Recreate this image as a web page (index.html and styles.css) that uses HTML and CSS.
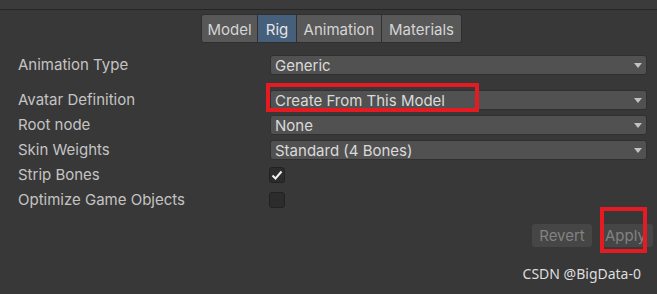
FILE: index.html
```html
<!DOCTYPE html>
<html lang="en">
<head>
    <meta charset="UTF-8">
    <title>Rig</title>
    <link rel="stylesheet" href="styles.css">
</head>
<body>
    <div class="topbar"></div>
    <div class="tabs">
        <div class="tab tab-model">Model</div>
        <div class="tab tab-rig active">Rig</div>
        <div class="tab tab-anim">Animation</div>
        <div class="tab tab-mat">Materials</div>
    </div>

    <div class="form">
        <div class="row">
            <div class="label">Animation Type</div>
            <div class="dropdown">Generic<span class="arrow"></span></div>
        </div>
        <div class="row row-avatar">
            <div class="label">Avatar Definition</div>
            <div class="dropdown">Create From This Model<span class="arrow"></span>
                <div class="mark mark-avatar"></div>
            </div>
        </div>
        <div class="row">
            <div class="label">Root node</div>
            <div class="dropdown">None<span class="arrow"></span></div>
        </div>
        <div class="row">
            <div class="label">Skin Weights</div>
            <div class="dropdown">Standard (4 Bones)<span class="arrow"></span></div>
        </div>
        <div class="row">
            <div class="label">Strip Bones</div>
            <div class="check">
                <svg width="12" height="12" viewBox="0 0 12 12"><path d="M1.5 6.5 L4.5 9.5 L10.5 2.5" fill="none" stroke="#f0f0f0" stroke-width="2"/></svg>
            </div>
        </div>
        <div class="row">
            <div class="label">Optimize Game Objects</div>
            <div class="check"></div>
        </div>
    </div>

    <div class="buttons">
        <div class="btn btn-revert">Revert</div>
        <div class="btn btn-apply">Apply
            <div class="mark mark-apply"></div>
        </div>
    </div>

    <div class="watermark">CSDN @BigData-0</div>
</body>
</html>
```

FILE: styles.css
```css
body {
    margin: 0;
    background-color: #383838;
    font-family: Inter, "Noto Sans", sans-serif;
    font-size: 15px;
    color: #c4c4c4;
    width: 657px;
    height: 294px;
    overflow: hidden;
}
.topbar {
    height: 9px;
    background-color: #3b3b3b;
    border-bottom: 1px solid #262626;
}
.tabs {
    display: flex;
    margin: 4px 0 0 201px;
    height: 29px;
}
.tab {
    box-sizing: border-box;
    height: 29px;
    line-height: 29px;
    background-color: #585858;
    color: #d4d4d4;
    border: 1px solid #2f2f2f;
    border-left: none;
    text-align: center;
}
.tab-model {
    width: 57px;
    border-left: 1px solid #2f2f2f;
    border-radius: 3px 0 0 3px;
}
.tab-rig {
    width: 39px;
}
.tab-anim {
    width: 85px;
}
.tab-mat {
    width: 80px;
    border-radius: 0 3px 3px 0;
}
.tab.active {
    background-color: #46607c;
    color: #e4e4e4;
}
.form {
    margin-top: 11px;
    padding: 0 10px 0 18px;
}
.row {
    display: grid;
    grid-template-columns: 252px 1fr;
    align-items: center;
    height: 20px;
    margin-bottom: 5px;
}
.row-avatar {
    margin-top: 15px;
}
.label {
    line-height: 20px;
    padding-top: 1px;
}
.dropdown {
    position: relative;
    box-sizing: border-box;
    height: 20px;
    line-height: 19px;
    padding-left: 4px;
    background-color: #515151;
    border: 1px solid #303030;
    border-radius: 3px;
    color: #dadada;
}
.arrow {
    position: absolute;
    right: 4px;
    top: 7px;
    width: 0;
    height: 0;
    border-left: 4px solid transparent;
    border-right: 4px solid transparent;
    border-top: 5px solid #c2c2c2;
}
.check {
    box-sizing: border-box;
    width: 16px;
    height: 16px;
    margin-left: -1px;
    background-color: #2c2c2c;
    border: 1px solid #222;
    border-radius: 3px;
    display: flex;
    align-items: center;
    justify-content: center;
}
.buttons {
    display: flex;
    justify-content: flex-end;
    gap: 10px;
    margin-top: 15px;
    padding-right: 4px;
}
.btn {
    position: relative;
    box-sizing: border-box;
    height: 23px;
    line-height: 24px;
    background-color: #464646;
    color: #828282;
    border-radius: 3px;
    text-align: center;
}
.btn-revert {
    width: 60px;
}
.btn-apply {
    width: 51px;
    text-align: left;
    padding-left: 3px;
}
.mark {
    position: absolute;
    border: 4px solid #e51b23;
}
.mark-avatar {
    left: -5px;
    top: -8px;
    width: 205px;
    height: 21px;
}
.mark-apply {
    left: -2px;
    top: -17px;
    width: 39px;
    height: 38px;
}
.watermark {
    margin-top: 17px;
    padding-right: 16px;
    text-align: right;
    font-family: "Noto Sans", sans-serif;
    font-size: 14px;
    color: #dedede;
}
```
